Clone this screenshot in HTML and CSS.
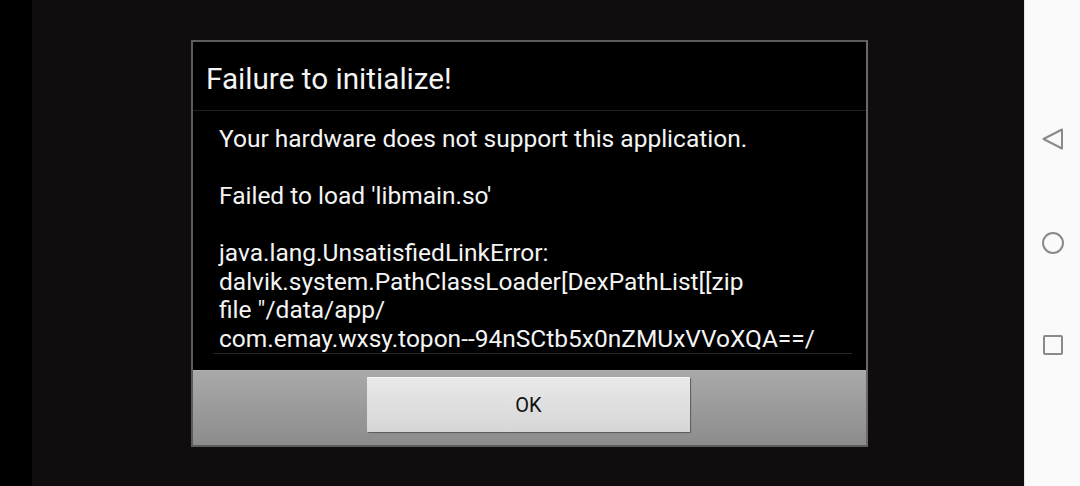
FILE: index.html
```html
<!DOCTYPE html>
<html>
<head>
<meta charset="utf-8">
<link rel="stylesheet" href="styles.css">
</head>
<body>
<div class="screen">
  <div class="edge"></div>
  <main class="app">
    <div class="dialog">
      <div class="title">Failure to initialize!</div>
      <div class="body">
        <div class="message">
          <p>Your hardware does not support this application.</p>
          <p>Failed to load 'libmain.so'</p>
          <p>java.lang.UnsatisfiedLinkError:<br>dalvik.system.PathClassLoader[DexPathList[[zip<br>file "/data/app/<br>com.emay.wxsy.topon--94nSCtb5x0nZMUxVVoXQA==/</p>
        </div>
        <div class="rule"></div>
      </div>
      <div class="buttons">
        <button class="ok">OK</button>
      </div>
    </div>
  </main>
  <nav class="navbar">
    <svg class="navicon" width="24" height="24" viewBox="0 0 24 24"><path d="M21 2.5 L2.5 12 L21 21.5 Z" fill="none" stroke="#8a8a8a" stroke-width="2" stroke-linejoin="round"/></svg>
    <svg class="navicon" width="24" height="24" viewBox="0 0 24 24"><circle cx="12" cy="12" r="10" fill="none" stroke="#8a8a8a" stroke-width="2"/></svg>
    <svg class="navicon sq" width="24" height="24" viewBox="0 0 24 24"><rect x="3" y="3" width="18" height="18" rx="1" fill="none" stroke="#8a8a8a" stroke-width="2"/></svg>
  </nav>
</div>
</body>
</html>
```
FILE: styles.css
```css
html, body {
  margin: 0;
  padding: 0;
  height: 100%;
  overflow: hidden;
}
body {
  font-family: Roboto, "Noto Sans", "Liberation Sans", sans-serif;
  background: #000;
}
.screen {
  display: flex;
  width: 1080px;
  height: 486px;
}
.edge {
  width: 32px;
  background: #000;
  flex: none;
}
.app {
  flex: 1;
  background: #0f0d0d;
  padding: 40px 0 0 159px;
  box-sizing: border-box;
}
.dialog {
  width: 677px;
  height: 407px;
  box-sizing: border-box;
  border: 2px solid #5c5c5c;
  border-right-color: #6a6a6a;
  background: #000;
  display: flex;
  flex-direction: column;
}
.title {
  height: 69px;
  box-sizing: border-box;
  border-bottom: 1px solid #1f1f1f;
  color: #f4f4f4;
  font-size: 29.7px;
  padding: 20px 0 0 13px;
  line-height: 34px;
}
.body {
  height: 259px;
  box-sizing: border-box;
  padding: 14px 14px 0 20px;
  display: flex;
  flex-direction: column;
}
.message {
  height: 228px;
  flex: none;
  overflow: hidden;
  color: #f4f4f4;
  font-size: 24.5px;
  line-height: 28.5px;
  padding-left: 6px;
}
.message p {
  margin: 0 0 28.5px 0;
}
.rule {
  height: 1px;
  flex: none;
  background: #262626;
}
.buttons {
  flex: 1;
  border-top: 1px solid #b0b0b0;
  background: linear-gradient(#a9a9a9, #8c8c8c);
  display: flex;
  justify-content: center;
  align-items: flex-start;
  padding-top: 6px;
  padding-right: 2px;
}
.ok {
  width: 323px;
  height: 55px;
  border: none;
  border-radius: 1px;
  background: linear-gradient(#e9e9e9, #d6d6d6);
  box-shadow: 1px 1px 1px #5a5a5a, inset 0 1px 0 #f4f4f4;
  font-family: Roboto, "Noto Sans", "Liberation Sans", sans-serif;
  font-size: 20px;
  color: #111;
  padding: 0;
}
.navbar {
  width: 56px;
  flex: none;
  background: #fafafa;
  border-left: 1px solid #e6e6e6;
  box-sizing: border-box;
  display: flex;
  flex-direction: column;
  align-items: center;
  padding-top: 127px;
  gap: 80px;
}
.navicon {
  display: block;
}
.sq {
  margin-top: -2px;
}
```
